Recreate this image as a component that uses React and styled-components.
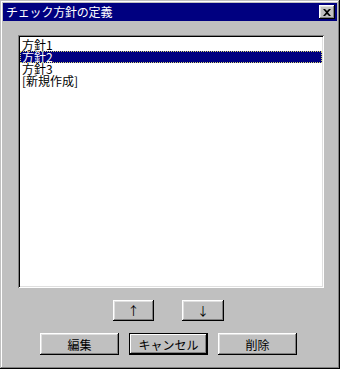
import React from 'react'
import styled, { createGlobalStyle } from 'styled-components'

const GlobalStyle = createGlobalStyle`
html, body {
  margin: 0;
  padding: 0;
  background: #c0c0c0;
}
* { box-sizing: border-box; }
`

const Window = styled.div`
width: 340px;
height: 369px;
background: #c0c0c0;
padding: 3px;
box-shadow: inset -1px -1px #000, inset 1px 1px #c0c0c0, inset -2px -2px #808080, inset 2px 2px #fff;
font-family: "Noto Sans CJK JP", "Noto Sans", sans-serif;
font-size: 12px;
color: #000;
display: flex;
flex-direction: column;
`

const TitleBar = styled.div`
height: 18px;
background: #000080;
color: #fff;
display: flex;
align-items: center;
justify-content: space-between;
padding: 0 2px 0 3px;
`

const Title = styled.span`
font-size: 12px;
line-height: 14px;
letter-spacing: -0.2px;
`

const CloseButton = styled.button`
width: 16px;
height: 14px;
padding: 0;
border: none;
background: #c0c0c0;
box-shadow: inset -1px -1px #000, inset 1px 1px #fff, inset -2px -2px #808080, inset 2px 2px #dfdfdf;
display: flex;
align-items: center;
justify-content: center;
`

const Body = styled.div`
flex: 1;
display: flex;
flex-direction: column;
align-items: center;
padding: 14px 13px 0 15px;
`

const ListBox = styled.div`
width: 306px;
height: 253px;
background: #fff;
padding: 4px 2px 2px 2px;
box-shadow: inset 1px 1px #808080, inset -1px -1px #fff, inset 2px 2px #000, inset -2px -2px #dfdfdf;
display: flex;
flex-direction: column;
`

const Item = styled.div`
height: 12px;
line-height: 12px;
padding-left: 2px;
white-space: nowrap;
background: ${p => (p.$selected ? '#000080' : 'transparent')};
color: ${p => (p.$selected ? '#fff' : '#000')};
outline: ${p => (p.$selected ? '1px dotted #d8d870' : 'none')};
outline-offset: -1px;
`

const Row = styled.div`
display: flex;
justify-content: center;
gap: ${p => p.$gap}px;
margin-top: ${p => p.$top}px;
padding-right: 5px;
`

const Button = styled.button`
width: ${p => p.$w}px;
height: ${p => p.$h}px;
padding: 0;
border: none;
background: #c0c0c0;
font-family: "Noto Sans CJK JP", "Noto Sans", sans-serif;
font-size: 12px;
color: #000;
box-shadow: ${p =>
  p.$default
    ? 'inset 0 0 0 1px #000, inset -2px -2px #000, inset 2px 2px #fff, inset -3px -3px #808080'
    : 'inset -1px -1px #000, inset 1px 1px #fff, inset -2px -2px #808080, inset 2px 2px #dfdfdf'};
display: flex;
align-items: center;
justify-content: center;
`

const items = ['方針1', '方針2', '方針3', '[新規作成]']

export default function App() {
  return (
    <>
      <GlobalStyle />
      <Window>
        <TitleBar>
          <Title>チェック方針の定義</Title>
          <CloseButton>
            <svg width="8" height="7" viewBox="0 0 8 7">
              <path d="M0 0h2l2 2 2-2h2L5 3.5 8 7H6L4 5 2 7H0l3-3.5z" fill="#000" />
            </svg>
          </CloseButton>
        </TitleBar>
        <Body>
          <ListBox>
            {items.map((t, i) => (
              <Item key={t} $selected={i === 1}>{t}</Item>
            ))}
          </ListBox>
          <Row $gap={28} $top={12}>
            <Button $w={41} $h={21}>↑</Button>
            <Button $w={42} $h={21}>↓</Button>
          </Row>
          <Row $gap={10} $top={12}>
            <Button $w={79} $h={22}>編集</Button>
            <Button $w={79} $h={22} $default>キャンセル</Button>
            <Button $w={79} $h={22}>削除</Button>
          </Row>
        </Body>
      </Window>
    </>
  )
}
